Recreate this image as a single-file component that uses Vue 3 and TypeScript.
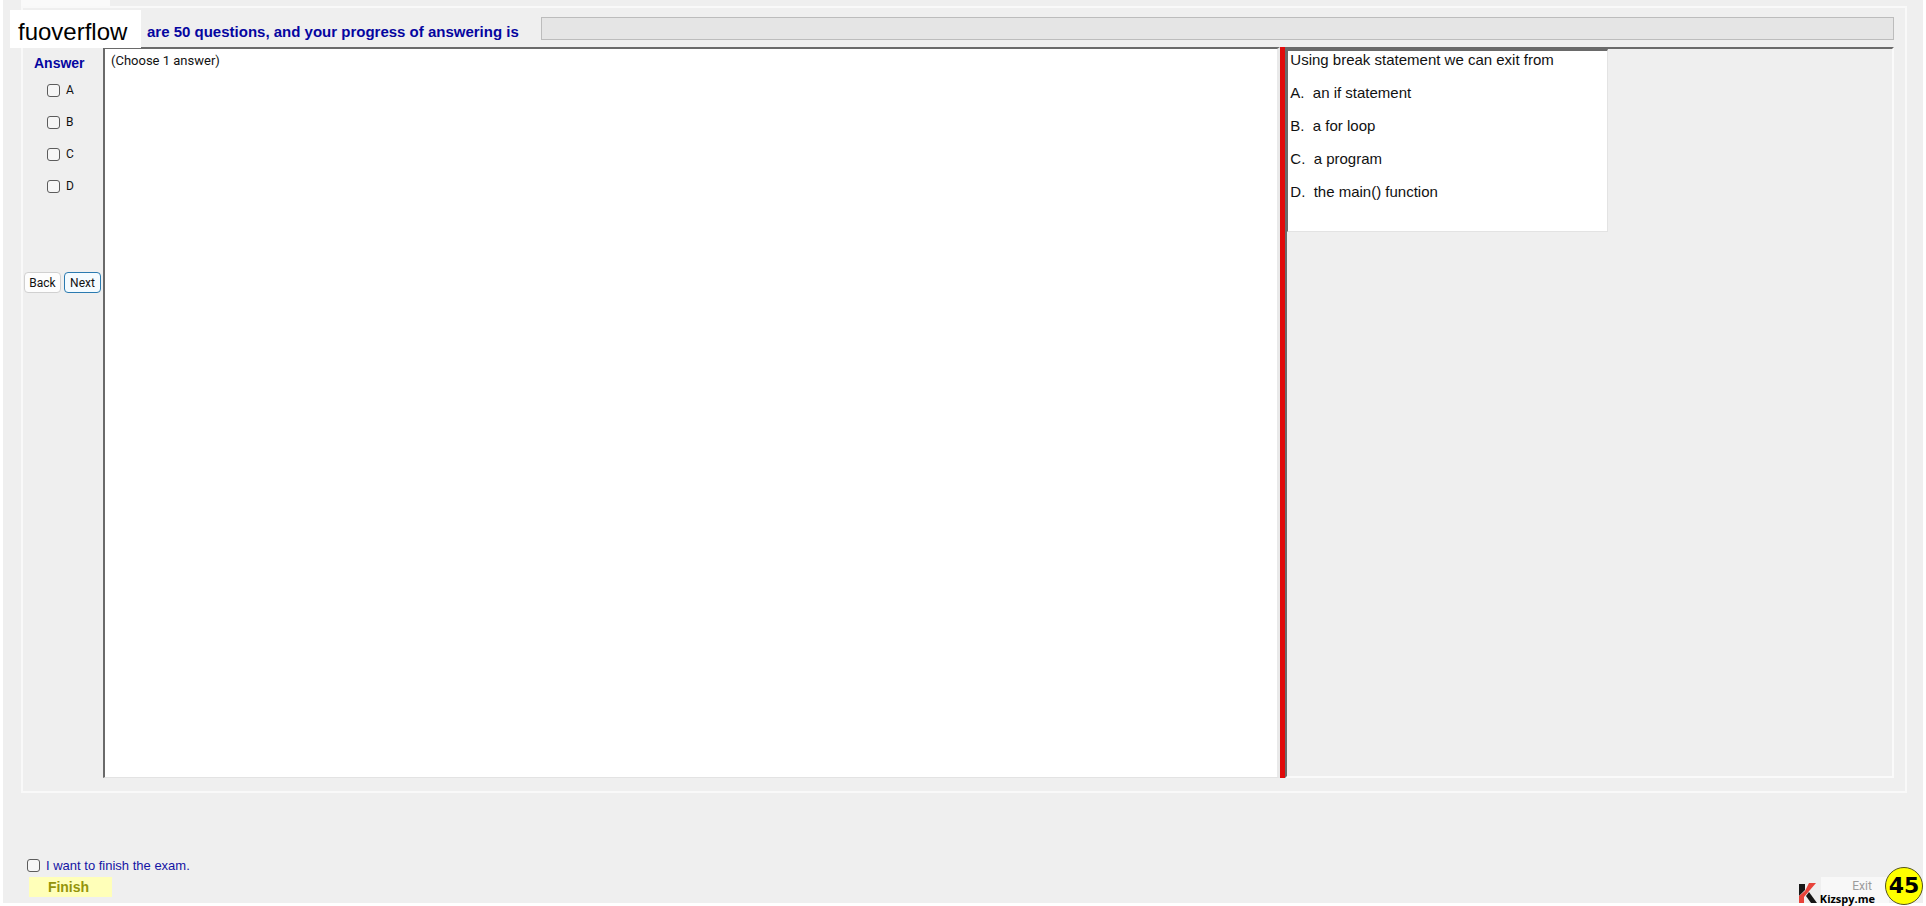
<script setup lang="ts">
import { ref } from 'vue'

interface Choice {
  key: string
  text: string
}

const choices: Choice[] = [
  { key: 'A', text: 'an if statement' },
  { key: 'B', text: 'a for loop' },
  { key: 'C', text: 'a program' },
  { key: 'D', text: 'the main() function' },
]
const picked = ref<string[]>([])
const wantsFinish = ref(false)
</script>

<template>
  <main class="exam">
    <div class="tab"></div>
    <div class="watermark">fuoverflow</div>

    <section class="group">
      <header class="progress-row">
        <span id="progress-label" class="progress-label">are 50 questions, and your progress of answering is</span>
        <div class="progress" role="progressbar" aria-labelledby="progress-label" aria-valuenow="0"></div>
      </header>

      <div class="workspace">
        <aside class="answers">
          <h2 class="answers-title">Answer</h2>
          <label v-for="c in choices" :key="c.key" class="option">
            <input v-model="picked" class="box" type="checkbox" :value="c.key" />
            <span>{{ c.key }}</span>
          </label>
          <div class="nav">
            <button type="button" class="nav-button">Back</button>
            <button type="button" class="nav-button current">Next</button>
          </div>
        </aside>

        <div class="sheet">(Choose 1 answer)</div>
        <div class="splitter"></div>
        <div class="side">
          <article class="question">
            <p class="line">Using break statement we can exit from</p>
            <p v-for="c in choices" :key="c.key" class="line">{{ c.key }}.&nbsp; {{ c.text }}</p>
          </article>
        </div>
      </div>
    </section>

    <footer class="footer">
      <div class="finish-area">
        <label class="finish-check">
          <input v-model="wantsFinish" class="box" type="checkbox" />
          <span>I want to finish the exam.</span>
        </label>
        <button type="button" class="finish">Finish</button>
      </div>
      <button type="button" class="exit">Exit</button>
    </footer>

    <div class="brand">
      <svg class="brand-mark" viewBox="0 0 18 21" aria-hidden="true">
        <path d="M0 1H6V7L0 13Z" fill="#171717" />
        <path d="M10 0H17L5 14V20H0V13L6 8Z" fill="#e8433a" />
        <path d="M7 13L10 9L18 20H12Z" fill="#171717" />
      </svg>
      <span>Kizspy.me</span>
    </div>
    <div class="badge">45</div>
  </main>
</template>

<style>
body {
  margin: 0;
  background: #fff;
}
</style>

<style scoped>
.exam {
  position: relative;
  display: flex;
  flex-direction: column;
  box-sizing: border-box;
  min-height: 100vh;
  border: solid #fff;
  border-width: 0 3px 3px;
  background: #efefef;
  font-family: "Liberation Sans", Arial, sans-serif;
  color: #111;
}
.tab {
  width: 89px;
  height: 6px;
  margin-left: 18px;
  background: #fafafa;
}
.watermark {
  position: absolute;
  z-index: 1;
  left: 7px;
  top: 10px;
  width: 131px;
  height: 38px;
  box-sizing: border-box;
  padding-left: 8px;
  background: #fff;
  color: #000;
  font-size: 24px;
  line-height: 44px;
}
.group {
  flex: 1;
  display: flex;
  flex-direction: column;
  margin: 0 16px 0 18px;
  padding: 0 11px 13px 0;
  border: 2px solid #f9f9f9;
}
.progress-row {
  display: flex;
  align-items: flex-start;
  height: 39px;
  padding-left: 124px;
}
.progress-label {
  width: 394px;
  padding-top: 15px;
  font-size: 15px;
  line-height: 18px;
  font-weight: bold;
  color: #0505a0;
  white-space: nowrap;
}
.progress {
  flex: 1;
  height: 21px;
  margin-top: 9px;
  border: 1px solid #bcbcbc;
  background: #e5e5e5;
}
.workspace {
  flex: 1;
  display: grid;
  grid-template-columns: 80px 1176fr 5px 608fr;
}
.answers {
  display: flex;
  flex-direction: column;
  font-family: Roboto, sans-serif;
  font-size: 12px;
}
.answers-title {
  margin: 8px 0 11px 11px;
  font: bold 14px/16px "Liberation Sans", Arial, sans-serif;
  color: #0505a0;
}
.option {
  display: flex;
  align-items: center;
  gap: 6px;
  height: 16px;
  margin: 0 0 16px 24px;
}
.box {
  appearance: none;
  box-sizing: border-box;
  width: 13px;
  height: 13px;
  margin: 0;
  border: 1px solid #5c5c5c;
  border-radius: 3px;
  background: #f6f6f6;
}
.box:checked {
  background: #0505a0;
}
.nav {
  display: flex;
  gap: 3px;
  margin: 62px 0 0 1px;
}
.nav-button {
  box-sizing: border-box;
  width: 37px;
  height: 21px;
  padding: 0;
  border: 1px solid #d0d0d0;
  border-radius: 4px;
  background: #fdfdfd;
  font: 12px/16px Roboto, sans-serif;
  color: #111;
}
.current {
  border-color: #2a7ab0;
  background: #f4fbff;
}
.sheet {
  padding: 3px 6px;
  border: solid;
  border-width: 2px 3px 1px 2px;
  border-color: #6a6a6a #e9e9e9 #e3e3e3 #6a6a6a;
  background: #fff;
  font: 13px/18px Roboto, sans-serif;
}
.splitter {
  background: #e00b0b;
}
.side {
  border: 2px solid;
  border-color: #6a6a6a #fafafa #fafafa #6a6a6a;
}
.question {
  width: 317px;
  height: 180px;
  padding-left: 2px;
  border: solid;
  border-width: 2px 1px 1px 1px;
  border-color: #6a6a6a #e3e3e3 #e3e3e3 #6a6a6a;
  background: #fff;
}
.line {
  margin: 0 0 15px;
  font-size: 15px;
  line-height: 18px;
  white-space: nowrap;
}
.footer {
  display: flex;
  align-items: flex-end;
  justify-content: space-between;
  height: 110px;
}
.finish-area {
  padding: 0 0 6px 24px;
}
.finish-check {
  display: flex;
  align-items: center;
  gap: 6px;
  height: 20px;
  font-size: 13px;
  color: #1414a4;
}
.finish {
  display: block;
  width: 83px;
  height: 20px;
  margin: 2px 0 0 2px;
  padding: 0 4px 0 0;
  border: 0;
  background: #ffffb9;
  font: bold 14px/20px "Liberation Sans", Arial, sans-serif;
  color: #94940a;
}
.exit {
  width: 68px;
  height: 26px;
  margin-right: 34px;
  padding: 0 0 8px 14px;
  border: 0;
  background: #f8f8f8;
  font: 12px/16px Roboto, sans-serif;
  color: #9c9c9c;
}
.brand {
  position: absolute;
  right: 48px;
  bottom: -3px;
  display: flex;
  align-items: flex-end;
  gap: 3px;
  color: #000;
  font: bold 11px/14px "Open Sans", "Noto Sans", sans-serif;
}
.brand-mark {
  width: 18px;
  height: 21px;
  margin-bottom: 2px;
}
.badge {
  position: absolute;
  right: 0;
  bottom: -2px;
  box-sizing: border-box;
  width: 38px;
  height: 38px;
  border: 1px solid #55551c;
  border-radius: 50%;
  background: #ffff00;
  color: #000;
  font: bold 22px/36px "DejaVu Sans", sans-serif;
  text-align: center;
}
</style>
